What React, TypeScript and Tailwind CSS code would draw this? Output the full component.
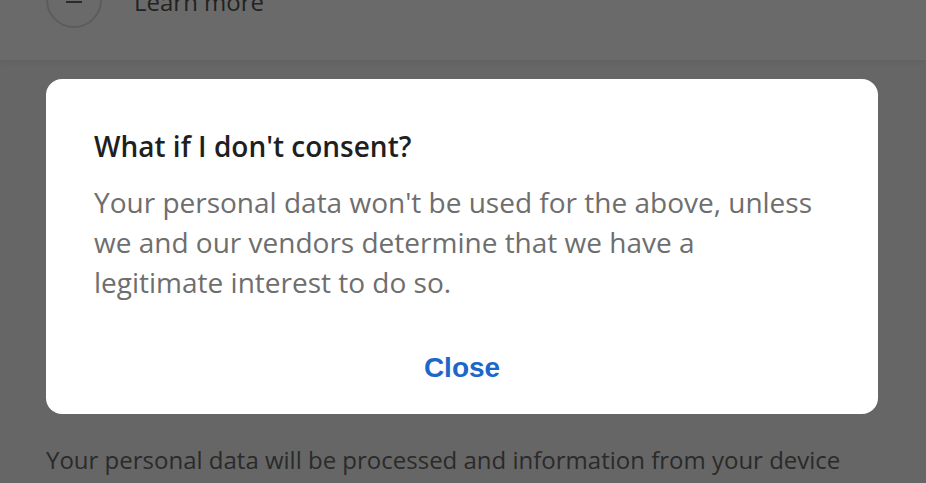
export default function App() {
  return (
    <div className="relative h-[483px] w-[926px] overflow-hidden bg-[#666666] font-['Open_Sans',sans-serif]">
      {/* page behind the dimmed overlay */}
      <div className="h-[60px] overflow-hidden bg-[#6a6a6a] shadow-[0_2px_6px_rgba(0,0,0,0.06)]">
        <div className="flex -translate-y-[28px] items-center gap-[32px] px-[46px]">
          <div className="flex h-[56px] w-[56px] items-center justify-center rounded-full border-2 border-[#5c5c5c]">
            <div className="mt-[4px] h-[2px] w-[16px] bg-[#2a2a2a]" />
          </div>
          <span className="mt-[4px] text-[24px] text-[#222222]">Learn more</span>
        </div>
      </div>
      <div className="px-[46px] pt-[380px] text-[24px] leading-[40px] text-[#2a2a2a]">
        Your personal data will be processed and information from your device (cookies, unique identifiers, and other device data) may be stored.
      </div>

      {/* dialog */}
      <div className="absolute left-[46px] top-[79px] flex h-[335px] w-[832px] flex-col rounded-[16px] bg-white px-[48px] pt-[49px]">
        <h2 className="text-[28px] font-semibold leading-[36px] text-[#1f1f1f]">What if I don't consent?</h2>
        <p className="mt-[18px] text-[28px] leading-[40px] text-[#6e6e6e]">
          Your personal data won't be used for the above, unless we and our vendors determine that we have a legitimate interest to do so.
        </p>
        <button className="mt-[48px] self-center font-['Liberation_Sans',sans-serif] text-[28px] font-bold leading-[36px] text-[#1c67c9]">
          Close
        </button>
      </div>
    </div>
  );
}
